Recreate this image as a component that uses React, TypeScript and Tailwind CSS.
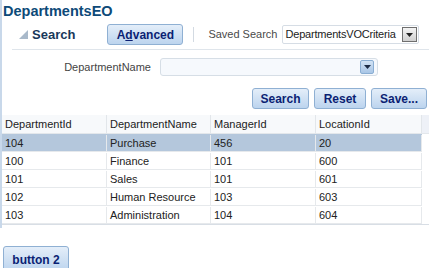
import React from 'react'

// ADF-style query panel + results table
const rows = [
  { id: '104', name: 'Purchase', mgr: '456', loc: '20', selected: true },
  { id: '100', name: 'Finance', mgr: '101', loc: '600' },
  { id: '101', name: 'Sales', mgr: '101', loc: '601' },
  { id: '102', name: 'Human Resource', mgr: '103', loc: '603' },
  { id: '103', name: 'Administration', mgr: '104', loc: '604' },
]

const btn =
  'h-[21px] rounded-[3px] border border-[#8fb0d3] bg-gradient-to-b from-[#e4eef9] to-[#bcd4ee] font-bold text-[12px] text-[#0b1f73] flex items-center justify-center'

function Arrow({ color = '#222' }: { color?: string }) {
  return (
    <svg width="7" height="4" viewBox="0 0 7 4">
      <polygon points="0,0 7,0 3.5,4" fill={color} />
    </svg>
  )
}

export default function App() {
  return (
    <div
      className="w-[429px] h-[268px] bg-white overflow-hidden text-[11px] text-[#222]"
      style={{ fontFamily: '"Liberation Sans", Arial, sans-serif' }}
    >
      <div className="border-l-2 border-[#c8d8ea] h-[228px] flex flex-col">
        <div className="pl-[1px] pt-[3px] h-[19px] leading-[16px] text-[14.5px] font-bold text-[#0d4a78]">DepartmentsEO</div>

        {/* search header */}
        <div className="flex items-center h-[19px] mt-[6px]">
          <svg width="9" height="9" viewBox="0 0 9 9" className="ml-[17px]">
            <polygon points="0,9 9,9 9,0" fill="#a9b9ca" />
          </svg>
          <span className="ml-[4px] text-[13px] font-bold text-[#18385a]">Search</span>
          <div className={btn + ' ml-[32px] w-[76px] h-[19px]'}>
            A<span className="underline">d</span>vanced
          </div>
          <div className="ml-[10px] w-px h-[15px] bg-[#d3dae2]" />
          <span className="ml-[14px] text-[#4a4a4a] text-[11px]">Saved Search</span>
          <div className="ml-[5px] w-[137px] h-[19px] border border-[#d6dde5] rounded-[2px] flex items-center justify-between pl-[2px] pr-[1px]">
            <span className="text-[11px] tracking-[-0.2px] text-[#222] whitespace-nowrap">DepartmentsVOCriteria</span>
            <div className="w-[15px] h-[15px] shrink-0 border border-[#6f6f6f] bg-gradient-to-b from-[#f4f4f4] to-[#d0d0d0] flex items-center justify-center">
              <Arrow />
            </div>
          </div>
        </div>
        <div className="ml-[10px] mt-[5px] h-px bg-[#dfe5eb]" />

        {/* criteria */}
        <div className="flex items-center h-[18px] mt-[8px]">
          <span className="w-[149px] text-right text-[11px] text-[#444]">DepartmentName</span>
          <div className="ml-[9px] w-[218px] h-[18px] border border-[#d6dee6] rounded-[3px] bg-[#f6f9fd] flex items-center justify-end pr-[3px]">
            <div className="w-[14px] h-[14px] rounded-[2px] border border-[#8aaed3] bg-gradient-to-b from-[#d2e3f5] to-[#a9c6e6] flex items-center justify-center">
              <Arrow color="#1c2b45" />
            </div>
          </div>
        </div>

        <div className="flex justify-end gap-[5px] pr-[2px] mt-[12px]">
          <div className={btn + ' w-[57px]'}>Search</div>
          <div className={btn + ' w-[52px]'}>Reset</div>
          <div className={btn + ' w-[56px]'}>Save...</div>
        </div>

        {/* results table */}
        <div className="mt-[6px] flex flex-col border-b border-[#d8dee5] text-[11px]">
          <div className="flex h-[19px] items-center border-b border-[#e3e7eb] bg-[#f7f9fb]">
            <div className="w-[105px] pl-[3px] border-r border-[#e2e6ea] h-full flex items-center">DepartmentId</div>
            <div className="w-[104px] pl-[3px] border-r border-[#e2e6ea] h-full flex items-center">DepartmentName</div>
            <div className="w-[105px] pl-[3px] border-r border-[#e2e6ea] h-full flex items-center">ManagerId</div>
            <div className="w-[106px] pl-[3px] border-r border-[#e2e6ea] h-full flex items-center">LocationId</div>
            <div className="flex-1 h-full bg-[#eef1f7]" />
          </div>
          {rows.map((r) => (
            <div key={r.id} className="flex h-[18px]">
              <div className={'flex w-[420px] border-b border-[#e6e9ec] pt-[1px] ' + (r.selected ? 'bg-[#b4c7dc]' : 'bg-white')}>
                <div className="w-[105px] pl-[3px] border-r border-[#e6e9ec] flex items-center">{r.id}</div>
                <div className="w-[104px] pl-[3px] border-r border-[#e6e9ec] flex items-center">{r.name}</div>
                <div className="w-[105px] pl-[3px] border-r border-[#e6e9ec] flex items-center">{r.mgr}</div>
                <div className="w-[106px] pl-[3px] border-r border-[#e6e9ec] flex items-center">{r.loc}</div>
              </div>
            </div>
          ))}
        </div>
      </div>

      <div className="mt-[18px] ml-[3px] w-[66px] h-[26px] rounded-t-[3px] border border-[#8fb0d3] bg-gradient-to-b from-[#e4eef9] to-[#bcd4ee] font-bold text-[12px] text-[#0b1f73] flex items-start justify-center pt-[4px]">
        button 2
      </div>
    </div>
  )
}
